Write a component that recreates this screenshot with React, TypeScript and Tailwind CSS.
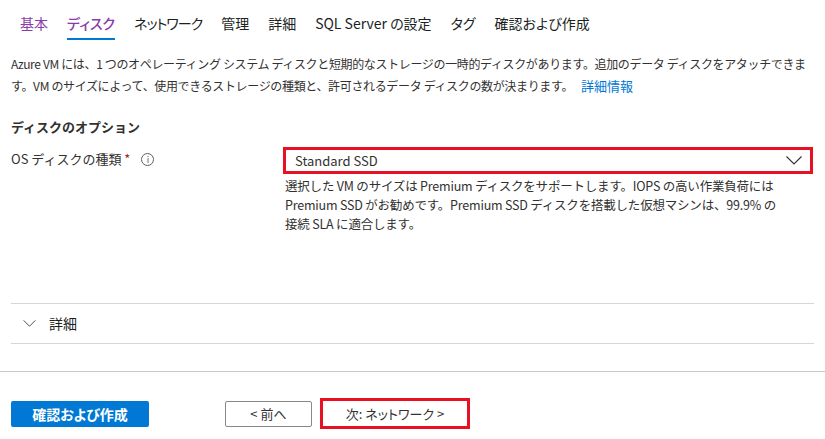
const tabs = [
  { label: '基本', state: 'visited', extra: '' },
  { label: 'ディスク', state: 'active', extra: '' },
  { label: 'ネットワーク', state: '', extra: 'tracking-[-1px]' },
  { label: '管理', state: '', extra: '' },
  { label: '詳細', state: '', extra: '' },
  { label: 'SQL Server の設定', state: '', extra: '' },
  { label: 'タグ', state: '', extra: '' },
  { label: '確認および作成', state: '', extra: '' },
]

function Chevron({ className }: { className?: string }) {
  return (
    <svg viewBox="0 0 16 9" className={className} fill="none" stroke="currentColor" strokeWidth={1.1}>
      <polyline points="0.5,0.5 8,8 15.5,0.5" />
    </svg>
  )
}

export default function App() {
  return (
    <div
      className="w-[825px] h-[439px] bg-white text-[#323130] text-[13px] overflow-hidden"
      style={{ fontFamily: '"Noto Sans CJK JP", "Open Sans", sans-serif' }}
    >
      {/* Tabs */}
      <div className="flex pl-[20px] pt-[13px] gap-[19px] [font-feature-settings:'palt']">
        {tabs.map((t) => (
          <div key={t.label} className="flex flex-col items-center">
            <span
              className={`text-[14px] leading-[20px] ${t.extra} ${
                t.state === 'visited'
                  ? 'text-[#8a3ca8]'
                  : t.state === 'active'
                  ? 'text-[#8a3ca8] font-medium'
                  : 'text-[#201f1e]'
              }`}
            >
              {t.label}
            </span>
            <div
              className={`mt-[5px] h-[2px] w-full ${
                t.state === 'active' ? 'bg-[#0078d4]' : 'bg-transparent'
              }`}
            />
          </div>
        ))}
      </div>

      {/* Description */}
      <p className="px-[11px] mt-[13px] leading-[22px] text-[12px] tracking-[-0.35px] whitespace-nowrap">
        Azure VM には、1 つのオペレーティング システム ディスクと短期的なストレージの一時的ディスクがあります。追加のデータ ディスクをアタッチできま
        <br />
        す。VM のサイズによって、使用できるストレージの種類と、許可されるデータ ディスクの数が決まります。
        <a className="ml-[8px] text-[#0078d4] text-[13px] tracking-normal">詳細情報</a>
      </p>

      {/* Disk options */}
      <h3 className="px-[11px] mt-[20px] font-semibold text-[13px] leading-[20px]">ディスクのオプション</h3>

      <div className="flex px-[11px] mt-[10px]">
        <div className="w-[272px] flex items-start gap-[11px] pt-[2px]">
          <span className="leading-[20px]">
            OS ディスクの種類 <span className="text-[#a4262c]">*</span>
          </span>
          <span className="mt-[4px] w-[13px] h-[13px] rounded-full border border-[#605e5c] flex items-center justify-center text-[9px] leading-none text-[#605e5c]">
            i
          </span>
        </div>
        <div className="w-[530px]">
          <div className="h-[27px] border-[3px] border-[#e81123] flex items-center justify-between pl-[9px] pr-[8px]">
            <span className="text-[13px] text-[#323130]">Standard SSD</span>
            <Chevron className="w-[16px] h-[9px] text-[#323130]" />
          </div>
          <p className="pl-[2px] mt-[2px] leading-[19px] text-[12.5px] tracking-[-0.2px]">
            選択した VM のサイズは Premium ディスクをサポートします。IOPS の高い作業負荷には
            <br />
            Premium SSD がお勧めです。Premium SSD ディスクを搭載した仮想マシンは、99.9% の
            <br />
            接続 SLA に適合します。
          </p>
        </div>
      </div>

      {/* Advanced section */}
      <div className="mx-[11px] mt-[70px] border-t border-b border-[#d6d6d6] h-[41px] flex items-center gap-[13px] pl-[12px]">
        <Chevron className="w-[13px] h-[7px] text-[#323130]" />
        <span className="text-[14px] text-[#201f1e]">詳細</span>
      </div>

      {/* Footer */}
      <div className="mt-[27px] border-t border-[#c8c8c8] flex items-center pl-[11px] pt-[26px] [font-feature-settings:'palt']">
        <button className="w-[138px] h-[26px] rounded-[2px] bg-[#0078d4] text-white font-bold text-[14px] leading-none">
          確認および作成
        </button>
        <button className="ml-[76px] w-[87px] h-[26px] rounded-[2px] border border-[#8a8886] bg-white text-[13px] leading-none">
          &lt; 前へ
        </button>
        <button className="ml-[8px] w-[150px] h-[31px] border-[3px] border-[#e81123] bg-white text-[13px] leading-none">
          次: ネットワーク &gt;
        </button>
      </div>
    </div>
  )
}
